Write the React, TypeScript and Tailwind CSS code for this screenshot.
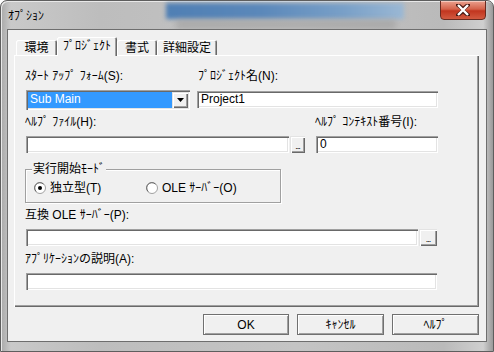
const font = "font-['Liberation_Sans','Noto_Sans_CJK_JP',sans-serif]";

const sunken =
  "bg-white shadow-[inset_1px_1px_0_#a0a0a0,inset_2px_2px_0_#696969,inset_-1px_-1px_0_#ffffff,inset_-2px_-2px_0_#e3e3e3]";
const raised =
  "bg-[#f0f0f0] shadow-[inset_1px_1px_0_#e3e3e3,inset_2px_2px_0_#ffffff,inset_-1px_-1px_0_#696969,inset_-2px_-2px_0_#a0a0a0]";

function Label({ children, className = "" }: { children: React.ReactNode; className?: string }) {
  return <div className={`h-[14px] whitespace-nowrap text-[12px] leading-[14px] text-black ${className}`}>{children}</div>;
}

function TextBox({ value = "", className = "" }: { value?: string; className?: string }) {
  return (
    <div className={`h-[17px] ${sunken} px-[4px] pt-[2px] text-[12px] leading-[13px] text-black ${className}`}>
      {value}
    </div>
  );
}

function DotsButton({ className = "" }: { className?: string }) {
  return (
    <div className={`flex h-[17px] items-end justify-center pb-[4px] ${raised} ${className}`}>
      <span className="text-[9px] leading-[6px] tracking-[-1px] text-black">...</span>
    </div>
  );
}

function Radio({ checked }: { checked?: boolean }) {
  return (
    <svg width="12" height="12" viewBox="0 0 12 12" className="shrink-0">
      <circle cx="6" cy="6" r="5.5" fill="#ffffff" stroke="#a0a0a0" />
      <path d="M2.2 9.5 A5 5 0 0 1 9.5 2.2" fill="none" stroke="#696969" />
      {checked && <circle cx="6" cy="6" r="2" fill="#000000" />}
    </svg>
  );
}

function Tab({ label, active, className = "" }: { label: string; active?: boolean; className?: string }) {
  return (
    <div
      className={`flex items-center justify-center rounded-t-[2px] bg-[#f0f0f0] text-[12px] leading-[14px] text-black shadow-[inset_1px_1px_0_#ffffff,inset_-1px_0_0_#696969,inset_-2px_0_0_#a0a0a0] ${
        active ? "relative z-10 -mb-[1px] h-[19px] pb-[1px]" : "h-[15px] pt-[1px]"
      } ${className}`}
    >
      {label}
    </div>
  );
}

function DialogButton({ label, className = "" }: { label: string; className?: string }) {
  return (
    <div
      className={`flex h-[21px] items-center justify-center bg-[#f0f0f0] text-[12px] leading-[14px] text-black shadow-[inset_0_0_0_1px_#707070,inset_1px_1px_0_1px_#ffffff,inset_-1px_-1px_0_1px_#a0a0a0] ${className}`}
    >
      {label}
    </div>
  );
}

export default function App() {
  return (
    <div
      className={`${font} relative flex h-[352px] w-[494px] flex-col overflow-hidden rounded-t-[7px] border border-[#5e5e5e] bg-[linear-gradient(90deg,#a9a9a9_0%,#c9c9c9_2%,#bdbdbd_20%,#c4c4c4_60%,#bababa_90%,#cfcfcf_98%,#9a9a9a_100%)] shadow-[inset_1px_1px_0_#e8e8e8]`}
    >
      {/* blurred desktop behind the glass title bar */}
      <div className="absolute left-[165px] top-[2px] h-[16px] w-[238px] bg-[linear-gradient(90deg,#4f7fb4_0%,#5b88ba_40%,#79a0c8_75%,#9bb8d4_100%)] blur-[2px]" />
      <div className="absolute left-[175px] top-[19px] h-[9px] w-[220px] bg-[#9a9a9a] opacity-60 blur-[3px]" />

      <div className="relative flex h-[28px] items-start">
        <div className="ml-[7px] mt-[8px] text-[12px] leading-[14px] text-black">ｵﾌﾟｼｮﾝ</div>
        <div className="ml-auto mr-[7px] -mt-[1px] flex h-[20px] w-[46px] items-center justify-center rounded-b-[4px] border border-[#6a2a20] bg-[linear-gradient(180deg,#eaa08e_0%,#d4624a_45%,#c2351f_55%,#d25a40_100%)] shadow-[inset_0_1px_0_#f5c8bc]">
          <svg width="14" height="12" viewBox="0 0 14 12">
            <path d="M2 1 L7 5 L12 1 M2 11 L7 7 L12 11" fill="none" stroke="#4a1a14" strokeWidth="4" strokeLinecap="square" />
            <path d="M2 1 L12 11 M12 1 L2 11" fill="none" stroke="#ffffff" strokeWidth="2.4" />
          </svg>
        </div>
      </div>

      <div className="relative mx-[6px] flex h-[313px] flex-col border border-[#6e6e6e] bg-[#f0f0f0]">
        <div className="ml-[8px] mt-[7px] flex items-end">
          <Tab label="環境" className="w-[41px]" />
          <Tab label="ﾌﾟﾛｼﾞｪｸﾄ" active className="w-[60px]" />
          <Tab label="書式" className="w-[40px]" />
          <Tab label="詳細設定" className="w-[60px]" />
        </div>

        <div className="ml-[6px] flex h-[252px] w-[465px] flex-col pl-[12px] pt-[14px] shadow-[inset_1px_1px_0_#ffffff,inset_-1px_-1px_0_#696969,inset_-2px_-2px_0_#a0a0a0]">
          <div className="flex gap-[8px]">
            <Label className="-ml-[1px] w-[165px]">ｽﾀｰﾄ ｱｯﾌﾟ ﾌｫｰﾑ(S):</Label>
            <Label>ﾌﾟﾛｼﾞｪｸﾄ名(N):</Label>
          </div>

          <div className="mt-[7px] flex items-start gap-[7px]">
            <div className={`flex h-[20px] w-[164px] p-[2px] ${sunken}`}>
              <div className="flex-1 bg-[#3399ff] px-[2px] pt-[1px] text-[12px] leading-[13px] text-white">Sub Main</div>
              <div className={`flex w-[16px] items-center justify-center ${raised}`}>
                <svg width="7" height="4" viewBox="0 0 7 4">
                  <path d="M0 0 H7 L3.5 4 Z" fill="#000000" />
                </svg>
              </div>
            </div>
            <TextBox value="Project1" className="mt-[1px] w-[241px]" />
          </div>

          <div className="mt-[5px] flex">
            <Label className="-ml-[1px] w-[290px]">ﾍﾙﾌﾟ ﾌｧｲﾙ(H):</Label>
            <Label>ﾍﾙﾌﾟ ｺﾝﾃｷｽﾄ番号(I):</Label>
          </div>

          <div className="mt-[7px] flex">
            <TextBox className="w-[263px]" />
            <DotsButton className="ml-[1px] w-[15px]" />
            <TextBox value="0" className="ml-[11px] w-[122px]" />
          </div>

          <div className="relative -ml-[1px] mt-[16px] flex h-[34px] w-[256px] items-start border border-[#a0a0a0] pl-[8px] pt-[11px] shadow-[1px_1px_0_#ffffff,inset_1px_1px_0_#ffffff]">
            <span className="absolute -top-[8px] left-[6px] bg-[#f0f0f0] px-[1px] text-[12px] leading-[14px] text-black">
              実行開始ﾓｰﾄﾞ
            </span>
            <div className="flex w-[112px] items-center gap-[4px]">
              <Radio checked />
              <Label>独立型(T)</Label>
            </div>
            <div className="flex items-center gap-[4px]">
              <Radio />
              <Label>OLE ｻｰﾊﾞｰ(O)</Label>
            </div>
          </div>

          <Label className="-ml-[1px] mt-[5px]">互換 OLE ｻｰﾊﾞｰ(P):</Label>

          <div className="mt-[7px] flex">
            <TextBox className="w-[392px]" />
            <DotsButton className="ml-[1px] w-[18px]" />
          </div>

          <Label className="-ml-[1px] mt-[6px]">ｱﾌﾟﾘｹｰｼｮﾝの説明(A):</Label>

          <TextBox className="mt-[7px] w-[411px]" />
        </div>

        <div className="mr-[7px] mt-[7px] flex justify-end gap-[8px]">
          <DialogButton label="OK" className="w-[86px]" />
          <DialogButton label="ｷｬﾝｾﾙ" className="w-[87px]" />
          <DialogButton label="ﾍﾙﾌﾟ" className="w-[87px]" />
        </div>
      </div>
    </div>
  );
}
